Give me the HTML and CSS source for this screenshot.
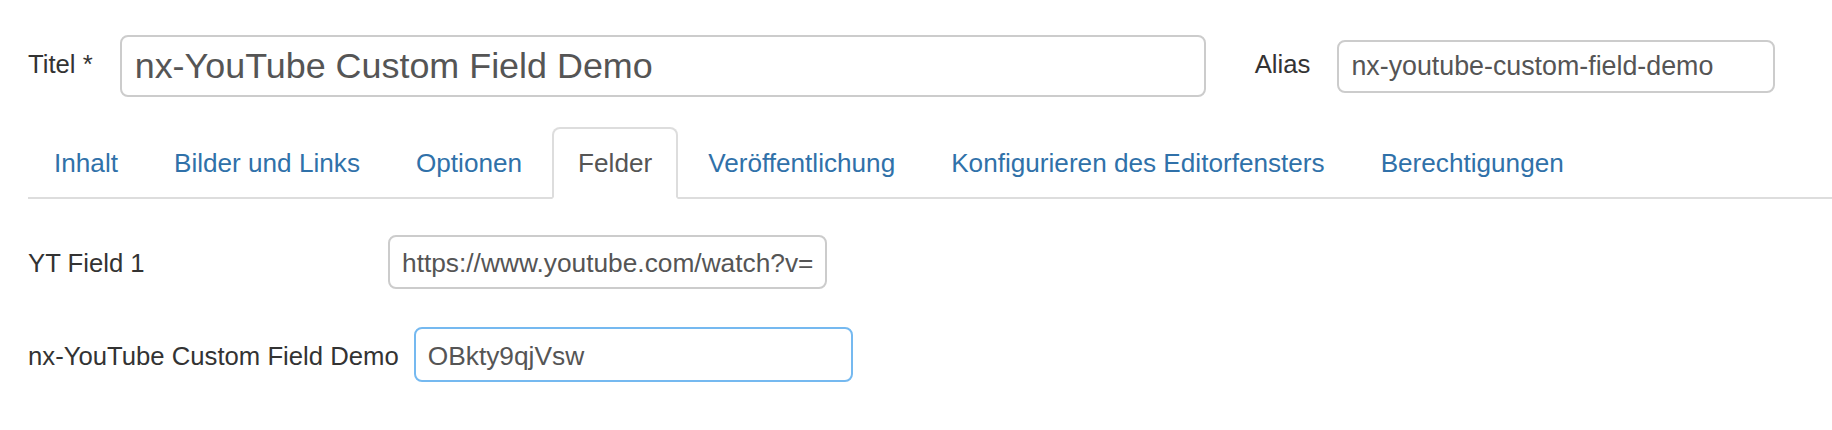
FILE: index.html
```html
<!DOCTYPE html>
<html lang="de">
<head>
<meta charset="utf-8">
<title>nx-YouTube Custom Field Demo</title>
<link rel="stylesheet" href="styles.css">
</head>
<body>
<div class="page">
  <div class="header">
    <div class="hlabel">Titel *</div>
    <div class="field title-input"><span class="val">nx-YouTube Custom Field Demo</span></div>
    <div class="hlabel alias-label">Alias</div>
    <div class="field alias-input"><span class="val">nx-youtube-custom-field-demo</span></div>
  </div>
  <ul class="tabs">
    <li class="tab">Inhalt</li>
    <li class="tab">Bilder und Links</li>
    <li class="tab">Optionen</li>
    <li class="tab active">Felder</li>
    <li class="tab">Veröffentlichung</li>
    <li class="tab">Konfigurieren des Editorfensters</li>
    <li class="tab">Berechtigungen</li>
  </ul>
  <div class="tab-content">
    <div class="row">
      <div class="clabel">YT Field 1</div>
      <div class="field std"><span class="val">https://www.youtube.com/watch?v=</span></div>
    </div>
    <div class="row">
      <div class="clabel">nx-YouTube Custom Field Demo</div>
      <div class="field std focus"><span class="val">OBkty9qjVsw</span></div>
    </div>
  </div>
</div>
</body>
</html>
```
FILE: styles.css
```css
html, body {
  margin: 0;
  padding: 0;
  background: #fff;
}
body {
  font-family: "Liberation Sans", Arial, Helvetica, sans-serif;
  font-size: 25.7px;
  color: #333;
}
.page {
  padding: 35px 0 0 28px;
}
.header {
  display: flex;
  align-items: center;
  height: 62px;
}
.hlabel {
  color: #333;
  margin-right: 27px;
  margin-bottom: 3px;
  white-space: nowrap;
}
.alias-label {
  margin-left: 49px;
}
.field {
  box-sizing: border-box;
  display: flex;
  align-items: center;
  border: 2px solid #ccc;
  border-radius: 8px;
  background: #fff;
  padding: 0 12px;
  color: #555;
  white-space: nowrap;
  overflow: hidden;
  font-size: 26.3px;
}
.val {
  display: block;
  flex: 1 1 0;
  min-width: 0;
  overflow: hidden;
}
.title-input {
  width: 1086px;
  height: 62px;
  font-size: 35.9px;
  padding-left: 13px;
}
.alias-input {
  width: 438px;
  height: 53px;
  margin-top: 1px;
  font-size: 26.8px;
}
.tabs {
  list-style: none;
  margin: 30px 0 0 0;
  padding: 0;
  display: flex;
  border-bottom: 2px solid #ddd;
}
.tab {
  padding: 16px 24px;
  line-height: 36px;
  font-size: 26.15px;
  border: 2px solid transparent;
  border-radius: 8px 8px 0 0;
  margin-right: 4px;
  margin-bottom: -2px;
  color: #3071a9;
  white-space: nowrap;
}
.tab.active {
  color: #555;
  background: #fff;
  border-color: #ddd #ddd transparent #ddd;
}
.tab-content {
  padding-top: 36px;
}
.row {
  display: flex;
  align-items: center;
  margin-bottom: 38px;
}
.clabel {
  box-sizing: border-box;
  min-width: 360px;
  padding-right: 15px;
  padding-top: 3px;
  white-space: nowrap;
  color: #333;
}
.std {
  width: 439px;
  height: 54px;
  padding-top: 3px;
}
.focus {
  border-color: #75b9f0;
  height: 55px;
}
```
